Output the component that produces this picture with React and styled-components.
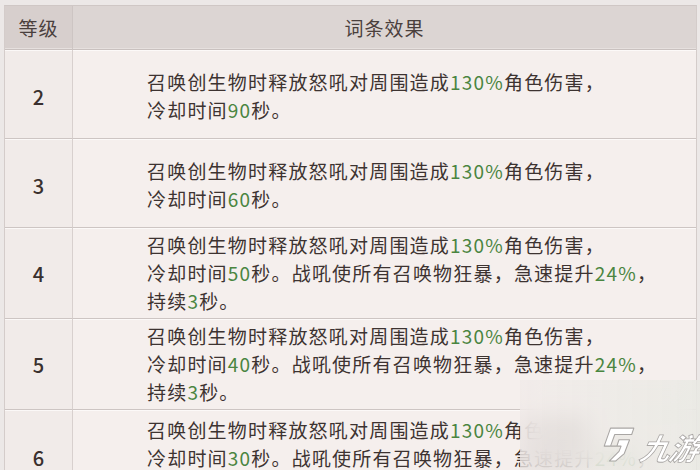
import React from "react";
import styled, { createGlobalStyle } from "styled-components";

const Global = createGlobalStyle`
  html, body { margin: 0; padding: 0; background: #efeae8; }
  body { width: 700px; height: 470px; overflow: hidden; }
`;

const Page = styled.div`
  position: relative;
  width: 700px;
  height: 470px;
  overflow: hidden;
  padding: 5px 3px 0 4px;
  box-sizing: border-box;
  background: #ece8e7;
  font-family: "Noto Sans CJK SC", "Noto Sans", sans-serif;
`;

const Table = styled.div`
  display: grid;
  grid-template-columns: 68px 1fr;
  border-left: 1px solid #d4ccca;
  border-right: 1px solid #d4ccca;
  border-top: 1px solid #cfc7c5;
`;

const HeadCell = styled.div`
  height: 43px;
  display: flex;
  align-items: center;
  justify-content: center;
  background: ${(p) => (p.$level ? "#d7cfcd" : "#dcd5d3")};
  color: #4a403d;
  font-size: 19px;
  letter-spacing: 1px;
  border-bottom: 1px solid #c9c1bf;
  box-shadow: inset 0 -1px 0 #e6e0de;
  ${(p) => (p.$level ? "border-right: 1px solid #cdc5c3;" : "")}
`;

const LevelCell = styled.div`
  height: ${(p) => p.$h}px;
  display: flex;
  align-items: center;
  justify-content: center;
  background: #f1ebe9;
  border-right: 1px solid #d8d0ce;
  border-bottom: 1px solid #cdc5c3;
  box-shadow: inset 0 1px 0 #fbf8f7;
  color: #3a302e;
  font-size: 20px;
  font-weight: 500;
  padding-top: ${(p) => p.$dy || 0}px;
  box-sizing: border-box;
`;

const EffectCell = styled.div`
  height: ${(p) => p.$h}px;
  display: flex;
  flex-direction: column;
  justify-content: center;
  padding-left: 74px;
  background: #f5efed;
  border-bottom: 1px solid #cdc5c3;
  box-shadow: inset 0 1px 0 #fcf9f8;
  box-sizing: border-box;
  padding-top: ${(p) => p.$dy || 0}px;
`;

const Line = styled.div`
  font-size: 19px;
  line-height: 28px;
  letter-spacing: 1.2px;
  color: #3d3331;
  white-space: nowrap;
`;

const Num = styled.span`
  color: #4a8540;
`;

const Watermark = styled.div`
  position: absolute;
  left: 520px;
  top: 380px;
  width: 180px;
  height: 90px;
  background: linear-gradient(90deg, rgba(240, 234, 232, 0.7), rgba(232, 233, 227, 0.75));
  backdrop-filter: blur(12px);
  -webkit-backdrop-filter: blur(12px);
  display: flex;
  align-items: flex-end;
  justify-content: flex-end;
  gap: 4px;
  padding: 0 1px 7px 0;
  box-sizing: border-box;
`;

const Brand = styled.span`
  font-family: "Noto Sans CJK SC", sans-serif;
  font-size: 30px;
  font-weight: 700;
  font-style: italic;
  line-height: 32px;
  color: #ffffff;
  letter-spacing: -1px;
  -webkit-text-stroke: 0.8px #a9a6a4;
  transform: skewX(-12deg);
`;

const rows = [
  { level: 2, h: 89, lines: [["召唤创生物时释放怒吼对周围造成", "130%", "角色伤害，"], ["冷却时间", "90", "秒。"]] },
  { level: 3, h: 89, lines: [["召唤创生物时释放怒吼对周围造成", "130%", "角色伤害，"], ["冷却时间", "60", "秒。"]] },
  {
    level: 4,
    h: 91,
    lines: [
      ["召唤创生物时释放怒吼对周围造成", "130%", "角色伤害，"],
      ["冷却时间", "50", "秒。战吼使所有召唤物狂暴，急速提升", "24%", "，"],
      ["持续", "3", "秒。"],
    ],
  },
  {
    level: 5,
    h: 91,
    lines: [
      ["召唤创生物时释放怒吼对周围造成", "130%", "角色伤害，"],
      ["冷却时间", "40", "秒。战吼使所有召唤物狂暴，急速提升", "24%", "，"],
      ["持续", "3", "秒。"],
    ],
  },
  {
    level: 6,
    h: 96,
    lines: [
      ["召唤创生物时释放怒吼对周围造成", "130%", "角色伤害，"],
      ["冷却时间", "30", "秒。战吼使所有召唤物狂暴，急速提升", "24%", "，"],
      ["持续", "3", "秒。"],
    ],
  },
];

function Logo() {
  return (
    <svg width="36" height="36" viewBox="0 0 34 34" style={{ marginBottom: 1 }}>
      <path
        d="M9 2 H31 L29 8 H13 L9 19 H15 L17 13 H27 L22 26 L14 33 H8 L17 24 L19 19 H12 L3 19 Z"
        fill="#ffffff"
        stroke="#a9a6a4"
        strokeWidth="1"
        strokeLinejoin="round"
      />
    </svg>
  );
}

export default function App() {
  return (
    <>
      <Global />
      <Page>
        <Table>
          <HeadCell $level>等级</HeadCell>
          <HeadCell>词条效果</HeadCell>
          {rows.map((r) => (
            <React.Fragment key={r.level}>
              <LevelCell $h={r.h} $dy={r.lines.length === 2 ? 4 : 0}>{r.level}</LevelCell>
              <EffectCell $h={r.h} $dy={r.lines.length === 2 ? 4 : 0}>
                {r.lines.map((parts, i) => (
                  <Line key={i}>
                    {parts.map((t, j) => (j % 2 === 1 ? <Num key={j}>{t}</Num> : <span key={j}>{t}</span>))}
                  </Line>
                ))}
              </EffectCell>
            </React.Fragment>
          ))}
        </Table>
        <Watermark>
          <Logo />
          <Brand>九游</Brand>
        </Watermark>
      </Page>
    </>
  );
}
